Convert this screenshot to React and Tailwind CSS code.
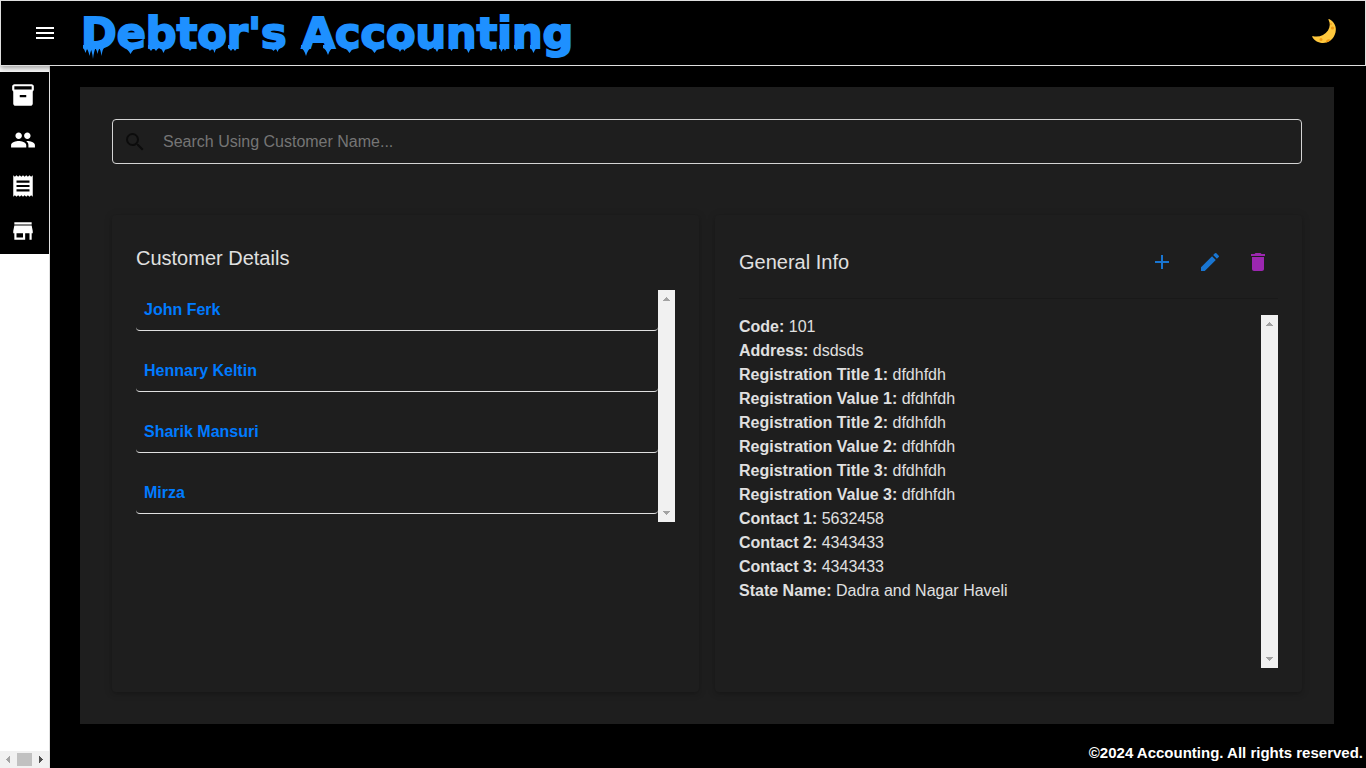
import React from "react";
import {
  MdMenu,
  MdInventory2,
  MdGroup,
  MdReceipt,
  MdStore,
  MdSearch,
  MdAdd,
  MdEdit,
  MdDelete,
} from "react-icons/md";

const navItems = [
  { label: "Inventory", Icon: MdInventory2 },
  { label: "Customers", Icon: MdGroup },
  { label: "Receipts", Icon: MdReceipt },
  { label: "Store", Icon: MdStore },
];

const customers = ["John Ferk", "Hennary Keltin", "Sharik Mansuri", "Mirza"];

const info = [
  ["Code", "101"],
  ["Address", "dsdsds"],
  ["Registration Title 1", "dfdhfdh"],
  ["Registration Value 1", "dfdhfdh"],
  ["Registration Title 2", "dfdhfdh"],
  ["Registration Value 2", "dfdhfdh"],
  ["Registration Title 3", "dfdhfdh"],
  ["Registration Value 3", "dfdhfdh"],
  ["Contact 1", "5632458"],
  ["Contact 2", "4343433"],
  ["Contact 3", "4343433"],
  ["State Name", "Dadra and Nagar Haveli"],
];

// Paint drips hanging under the title: [x, width, length].
const drips = [
  [2, 5, 7], [5, 7, 10], [9, 6, 13], [14, 5, 8], [18, 5, 10],
  [43, 13, 8],
  [67, 6, 5], [72, 6, 5], [79, 7, 7],
  [106, 6, 5],
  [126, 6, 5], [131, 5, 7],
  [147, 6, 5], [151, 6, 5],
  [189, 7, 5], [194, 5, 6],
  [220, 10, 10], [242, 10, 9],
  [263, 11, 7], [288, 11, 7],
  [316, 6, 6], [321, 5, 5],
  [344, 6, 5], [353, 6, 6],
  [368, 5, 5], [384, 7, 7],
  [407, 6, 5],
  [418, 5, 6], [422, 4, 5],
  [433, 5, 5], [449, 7, 7],
];

function Drips() {
  return (
    <svg className="absolute top-[44px] left-0" width="494" height="16" viewBox="0 0 494 16" aria-hidden="true">
      {drips.map(([x, w, h]) => (
        <path
          key={x}
          d={`M${x} 0H${x + w}V3Q${x + w * 0.7} 4 ${x + w / 2} ${h + 1}Q${x + w * 0.3} 4 ${x} 3Z`}
          fill="currentColor"
        />
      ))}
    </svg>
  );
}

function Moon() {
  return (
    <svg width="26" height="26" viewBox="0 0 26 26" aria-hidden="true">
      <path
        d="M18 1C23 3.500 26 8.500 24.500 14.500C22.800 21.500 17 25.500 11 25C6.500 24.600 2.800 22 1 18.500C1.500 18 2.500 18.200 3.500 18.400C9 19 14 17 17 12.500C19.200 9 19.300 5 17.600 2C17.300 1.300 17.500 .9 18 1Z"
        fill="#ffc83d"
      />
      <circle cx="21.500" cy="10" r="1.600" fill="#f19a14" />
      <circle cx="20" cy="6" r="1" fill="#f5a623" />
      <circle cx="10" cy="21.500" r="1.500" fill="#f19a14" />
      <path d="M15 23.500C15.500 21 18.500 20.500 19.500 22C18 23.600 16.500 24.400 15 24.600Z" fill="#f19a14" />
    </svg>
  );
}

function VerticalBar() {
  return (
    <div className="flex w-[17px] shrink-0 flex-col items-center justify-between bg-[#f1f1f1] py-[7px]" aria-hidden="true">
      <svg width="7" height="4" viewBox="0 0 7 4" shapeRendering="crispEdges">
        <path d="M3 0h1v1h1v1h1v1h1v1H0V3h1V2h1V1h1z" fill="#a3a3a3" />
      </svg>
      <svg width="7" height="4" viewBox="0 0 7 4" shapeRendering="crispEdges">
        <path d="M0 0h7v1H6v1H5v1H4v1H3V3H2V2H1V1H0z" fill="#a3a3a3" />
      </svg>
    </div>
  );
}

function HorizontalBar() {
  return (
    <div className="flex h-[17px] items-center justify-between bg-[#f1f1f1] px-[6px]" aria-hidden="true">
      <svg width="4" height="7" viewBox="0 0 4 7" shapeRendering="crispEdges">
        <path d="M3 0h1v7H3V6H2V5H1V4H0V3h1V2h1V1h1z" fill="#a3a3a3" />
      </svg>
      <div className="h-[13px] w-[15px] bg-[#c1c1c1]" />
      <svg width="4" height="7" viewBox="0 0 4 7" shapeRendering="crispEdges">
        <path d="M0 0h1v1h1v1h1v1h1v1H3v1H2v1H1v1H0z" fill="#505050" />
      </svg>
    </div>
  );
}

const cardClass =
  "flex flex-1 flex-col rounded bg-[#1e1e1e] p-6 shadow-[0_2px_4px_-1px_rgba(0,0,0,0.2),0_1px_10px_0_rgba(0,0,0,0.12)]";

export default function App() {
  return (
    <div className="flex min-h-screen flex-col bg-black font-['Liberation_Sans',Arial,sans-serif] text-base text-[#e0e0e0]">
      <header className="relative z-10 flex h-[66px] shrink-0 items-center border border-[#dedede] bg-black pr-7 pl-8 shadow-[0_2px_4px_-1px_rgba(0,0,0,0.2),0_4px_5px_0_rgba(0,0,0,0.14),0_1px_10px_0_rgba(0,0,0,0.12)]">
        <button type="button" aria-label="Open menu" className="text-white">
          <MdMenu size={24} />
        </button>
        <h1 className="relative ml-6 text-[43px] leading-[64px] font-bold whitespace-nowrap text-[#1e90ff] font-['DejaVu_Sans',sans-serif] [-webkit-text-stroke:2px_#1e90ff]">
          Debtor's Accounting
          <Drips />
        </h1>
        <button type="button" aria-label="Toggle dark mode" className="mb-1 ml-auto">
          <Moon />
        </button>
      </header>

      <div className="flex flex-1">
        <aside className="flex w-[50px] shrink-0 flex-col border-r border-[#e0e0e0] bg-white pt-[6px]">
          <nav className="flex h-[182px] flex-col bg-black">
            {navItems.map(({ label, Icon }) => (
              <a key={label} href="#" aria-label={label} className="flex flex-1 items-center pl-[10px] text-white">
                <Icon size={26} />
              </a>
            ))}
          </nav>
          <div className="mt-auto">
            <HorizontalBar />
          </div>
        </aside>

        <div className="flex min-w-0 flex-1 flex-col">
          <main className="mt-[21px] mr-8 ml-[30px] flex flex-1 flex-col bg-[#1e1e1e] p-8">
            <label className="flex h-[45px] items-center rounded border border-[#d4d4d4] pl-[10px]">
              <MdSearch size={24} className="shrink-0 text-[#0c0c0c]" />
              <input
                type="text"
                aria-label="Search customers"
                placeholder="Search Using Customer Name..."
                className="ml-4 min-w-0 flex-1 bg-transparent outline-none placeholder:text-[#757575]"
              />
            </label>

            <div className="mt-[51px] flex flex-1 gap-4">
              <section className={cardClass}>
                <h2 className="mt-[3px] text-xl leading-8">Customer Details</h2>
                <div className="mt-4 flex h-[232px]">
                  <ul className="flex flex-1 flex-col gap-5">
                    {customers.map((name) => (
                      <li key={name} className="h-[41px] rounded border-b border-[#e0e0e0] px-2 leading-10 font-bold">
                        <a href="#" className="text-[#007bff]">{name}</a>
                      </li>
                    ))}
                  </ul>
                  <VerticalBar />
                </div>
              </section>

              <section className={cardClass}>
                <div className="flex h-[60px] items-center border-b border-[#191919] pb-[13px]">
                  <h2 className="flex-1 text-xl leading-8">General Info</h2>
                  <div className="flex gap-6 pr-2">
                    <button type="button" aria-label="Add" className="text-[#1976d2]">
                      <MdAdd size={24} />
                    </button>
                    <button type="button" aria-label="Edit" className="text-[#1976d2]">
                      <MdEdit size={24} />
                    </button>
                    <button type="button" aria-label="Delete" className="text-[#9c27b0]">
                      <MdDelete size={24} />
                    </button>
                  </div>
                </div>
                <div className="mt-4 flex flex-1">
                  <div className="flex-1 leading-6">
                    {info.map(([label, value]) => (
                      <p key={label}>
                        <strong>{label}:</strong> {value}
                      </p>
                    ))}
                  </div>
                  <VerticalBar />
                </div>
              </section>
            </div>
          </main>

          <footer className="flex h-11 items-center justify-end pt-[14px] pr-[3px] text-[15px] font-bold text-white">
            ©2024 Accounting. All rights reserved.
          </footer>
        </div>
      </div>
    </div>
  );
}
